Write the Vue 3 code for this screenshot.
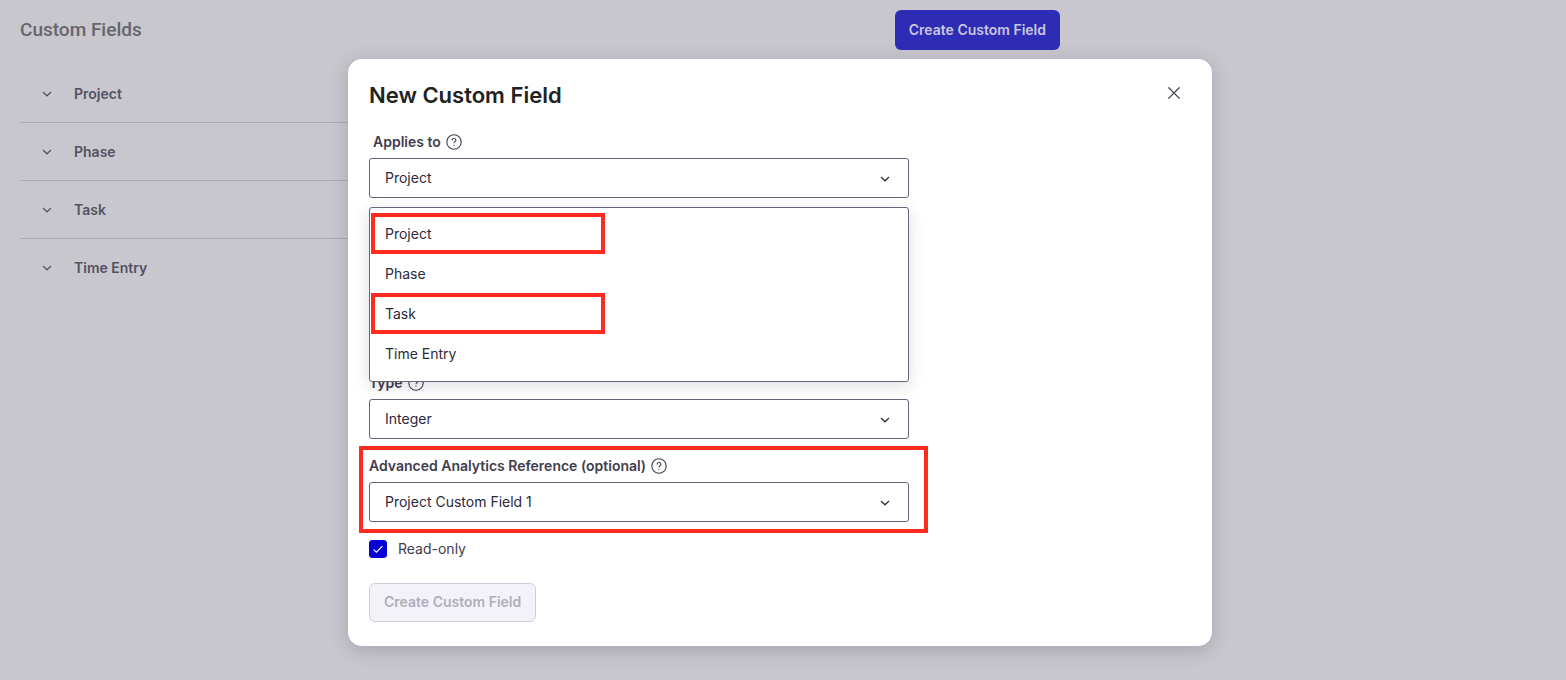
<template>
  <div class="page">
    <main class="content">
      <header class="page-header">
        <h1 class="page-title">Custom Fields</h1>
        <button type="button" class="btn btn-primary">Create Custom Field</button>
      </header>
      <ul class="groups">
        <li v-for="entity in entities" :key="entity" class="group">
          <button type="button" class="group-toggle">
            <svg class="chevron" viewBox="0 0 10 6" aria-hidden="true">
              <path d="M1 1L5 4.8L9 1" />
            </svg>
            <span>{{ entity }}</span>
          </button>
        </li>
      </ul>
    </main>

    <div class="overlay">
      <section class="modal" role="dialog" aria-labelledby="modal-title">
        <header class="modal-header">
          <h2 id="modal-title" class="modal-title">New Custom Field</h2>
          <button type="button" class="close" aria-label="Close">
            <svg viewBox="0 0 14 14" aria-hidden="true">
              <path d="M1.4 1.4L12.6 12.6M12.6 1.4L1.4 12.6" />
            </svg>
          </button>
        </header>

        <form class="form" @submit.prevent>
          <div
            v-for="field in fields"
            :key="field.id"
            class="field"
            :class="{ open: field.open, marked: field.marked }"
          >
            <div class="field-label">
              <label :for="field.id">{{ field.label }}</label>
              <svg class="help" viewBox="0 0 16 16" aria-hidden="true">
                <circle cx="8" cy="8" r="7.2" />
                <path d="M6.1 6.5C6.1 5.3 6.9 4.5 8 4.5C9.1 4.5 9.9 5.2 9.9 6.2C9.9 7.6 8 7.6 8 9.3" />
                <path d="M8 10.7V11.8" />
              </svg>
            </div>
            <div class="select-wrap">
              <select :id="field.id" v-model="field.value" class="select">
                <option v-for="option in field.options" :key="option">{{ option }}</option>
              </select>
              <svg class="chevron select-chevron" viewBox="0 0 10 6" aria-hidden="true">
                <path d="M1 1L5 4.8L9 1" />
              </svg>
              <ul v-if="field.open" class="menu" role="listbox">
                <li
                  v-for="option in field.options"
                  :key="option"
                  class="menu-item"
                  :class="{ highlighted: highlighted.includes(option) }"
                  role="option"
                  :aria-selected="option === field.value"
                  @click="field.value = option"
                >
                  {{ option }}
                </li>
              </ul>
            </div>
          </div>

          <label class="check">
            <input v-model="readOnly" type="checkbox" />
            <span>Read-only</span>
            <svg class="tick" viewBox="0 0 18 18" aria-hidden="true">
              <path d="M4.6 9.6L7.4 12.2L13.4 6.2" />
            </svg>
          </label>

          <button type="submit" class="btn btn-disabled" disabled>Create Custom Field</button>
        </form>
      </section>
    </div>
  </div>
</template>

<script setup>
import { ref } from 'vue'

const entities = ['Project', 'Phase', 'Task', 'Time Entry']
const highlighted = ['Project', 'Task']

const fields = ref([
  { id: 'applies-to', label: 'Applies to', value: 'Project', options: entities, open: true },
  { id: 'type', label: 'Type', value: 'Integer', options: ['Integer'] },
  {
    id: 'reference',
    label: 'Advanced Analytics Reference (optional)',
    value: 'Project Custom Field 1',
    options: ['Project Custom Field 1'],
    marked: true
  }
])

const readOnly = ref(true)
</script>

<style>
body {
  margin: 0;
  background: #c8c7ce;
}
</style>

<style scoped>
.page {
  min-height: 100vh;
  font-family: Inter, "Liberation Sans", sans-serif;
  font-size: 14px;
  line-height: 20px;
  color: #2c2a3b;
}
.content {
  max-width: 1040px;
  padding: 10px 20px;
}
.page-header {
  display: flex;
  align-items: center;
  justify-content: space-between;
  margin-bottom: 15px;
}
.page-title {
  margin: 0;
  font-family: Roboto, "Liberation Sans", sans-serif;
  font-size: 19px;
  font-weight: 500;
  color: #66656b;
}
.btn {
  padding: 0 14px 2px;
  border: 0;
  border-radius: 6px;
  font-family: inherit;
  font-size: 14px;
  font-weight: 600;
}
.btn-primary {
  height: 40px;
  background: #2e2cb5;
  color: #c8c7df;
}
.groups {
  margin: 0;
  padding: 0;
  list-style: none;
}
.group + .group {
  border-top: 1px solid #adabb9;
}
.group-toggle {
  display: flex;
  align-items: center;
  gap: 22px;
  width: 100%;
  height: 57px;
  padding: 0 22px;
  border: 0;
  background: none;
  font-family: inherit;
  font-size: 14px;
  font-weight: 600;
  color: #545262;
}
.chevron {
  width: 10px;
  height: 6px;
  fill: none;
  stroke: currentColor;
  stroke-width: 1.2;
}
.overlay {
  position: absolute;
  top: 0;
  left: 0;
  right: 6px;
  padding: 59px 24px 24px;
}
.modal {
  box-sizing: border-box;
  max-width: 864px;
  margin: 0 auto;
  padding: 22px 21px 24px;
  border-radius: 14px;
  background: #fff;
  box-shadow: 0 4px 20px rgba(40, 38, 56, 0.22);
}
.modal-header {
  display: flex;
  align-items: center;
  justify-content: space-between;
  margin-bottom: 23px;
}
.modal-title {
  margin: 0;
  font-size: 22px;
  line-height: 28px;
  font-weight: 600;
  color: #222;
}
.close {
  display: flex;
  padding: 4px 10px 8px;
  border: 0;
  background: none;
  color: #3b394a;
}
.close svg {
  width: 14px;
  height: 14px;
  fill: none;
  stroke: currentColor;
  stroke-width: 1.3;
}
.form {
  max-width: 540px;
}
.field {
  position: relative;
  margin-bottom: 17px;
}
/* room for the expanded option list */
.field.open {
  margin-bottom: 175px;
}
.field.open .field-label {
  padding-left: 4px;
}
.field.marked::after {
  content: "";
  position: absolute;
  inset: -10px -19px -11px -10px;
  border: 4px solid #ff2b20;
  pointer-events: none;
}
.field-label {
  display: flex;
  align-items: center;
  gap: 5px;
  margin-bottom: 6px;
  font-weight: 600;
  color: #3f3d4e;
}
.help {
  width: 16px;
  height: 16px;
  fill: none;
  stroke: currentColor;
  stroke-width: 1.1;
}
.select-wrap {
  position: relative;
}
.select {
  display: block;
  width: 100%;
  height: 40px;
  padding: 0 40px 2px 15px;
  border: 1px solid #686579;
  border-radius: 3px;
  appearance: none;
  background: #fff;
  font-family: inherit;
  font-size: 14px;
  color: inherit;
}
.select-chevron {
  position: absolute;
  top: 18px;
  right: 19px;
  pointer-events: none;
}
.menu {
  position: absolute;
  top: 49px;
  left: 0;
  right: 0;
  z-index: 1;
  margin: 0;
  padding: 6px 0 7px;
  border: 1px solid #686579;
  border-radius: 3px;
  background: #fff;
  box-shadow: 0 4px 16px rgba(40, 38, 56, 0.16);
  list-style: none;
}
.menu-item {
  position: relative;
  padding: 10px 15px;
}
.menu-item.highlighted::after {
  content: "";
  position: absolute;
  top: -1px;
  bottom: 0;
  left: 1px;
  box-sizing: border-box;
  width: 234px;
  border: 4px solid #ff2b20;
}
.check {
  position: relative;
  display: flex;
  align-items: center;
  gap: 11px;
  margin-bottom: 24px;
  color: #3f3d4e;
}
.check input {
  width: 18px;
  height: 18px;
  margin: 0;
  border: 1px solid #686579;
  border-radius: 3px;
  appearance: none;
}
.check input:checked {
  border-color: #0500d6;
  background: #0500d6;
}
.tick {
  position: absolute;
  left: 0;
  width: 18px;
  height: 18px;
  fill: none;
  stroke: #fff;
  stroke-width: 1.2;
}
.btn-disabled {
  display: block;
  height: 39px;
  border: 1px solid #d0cfdc;
  background: #f4f2f9;
  color: #b0aebb;
}
</style>
